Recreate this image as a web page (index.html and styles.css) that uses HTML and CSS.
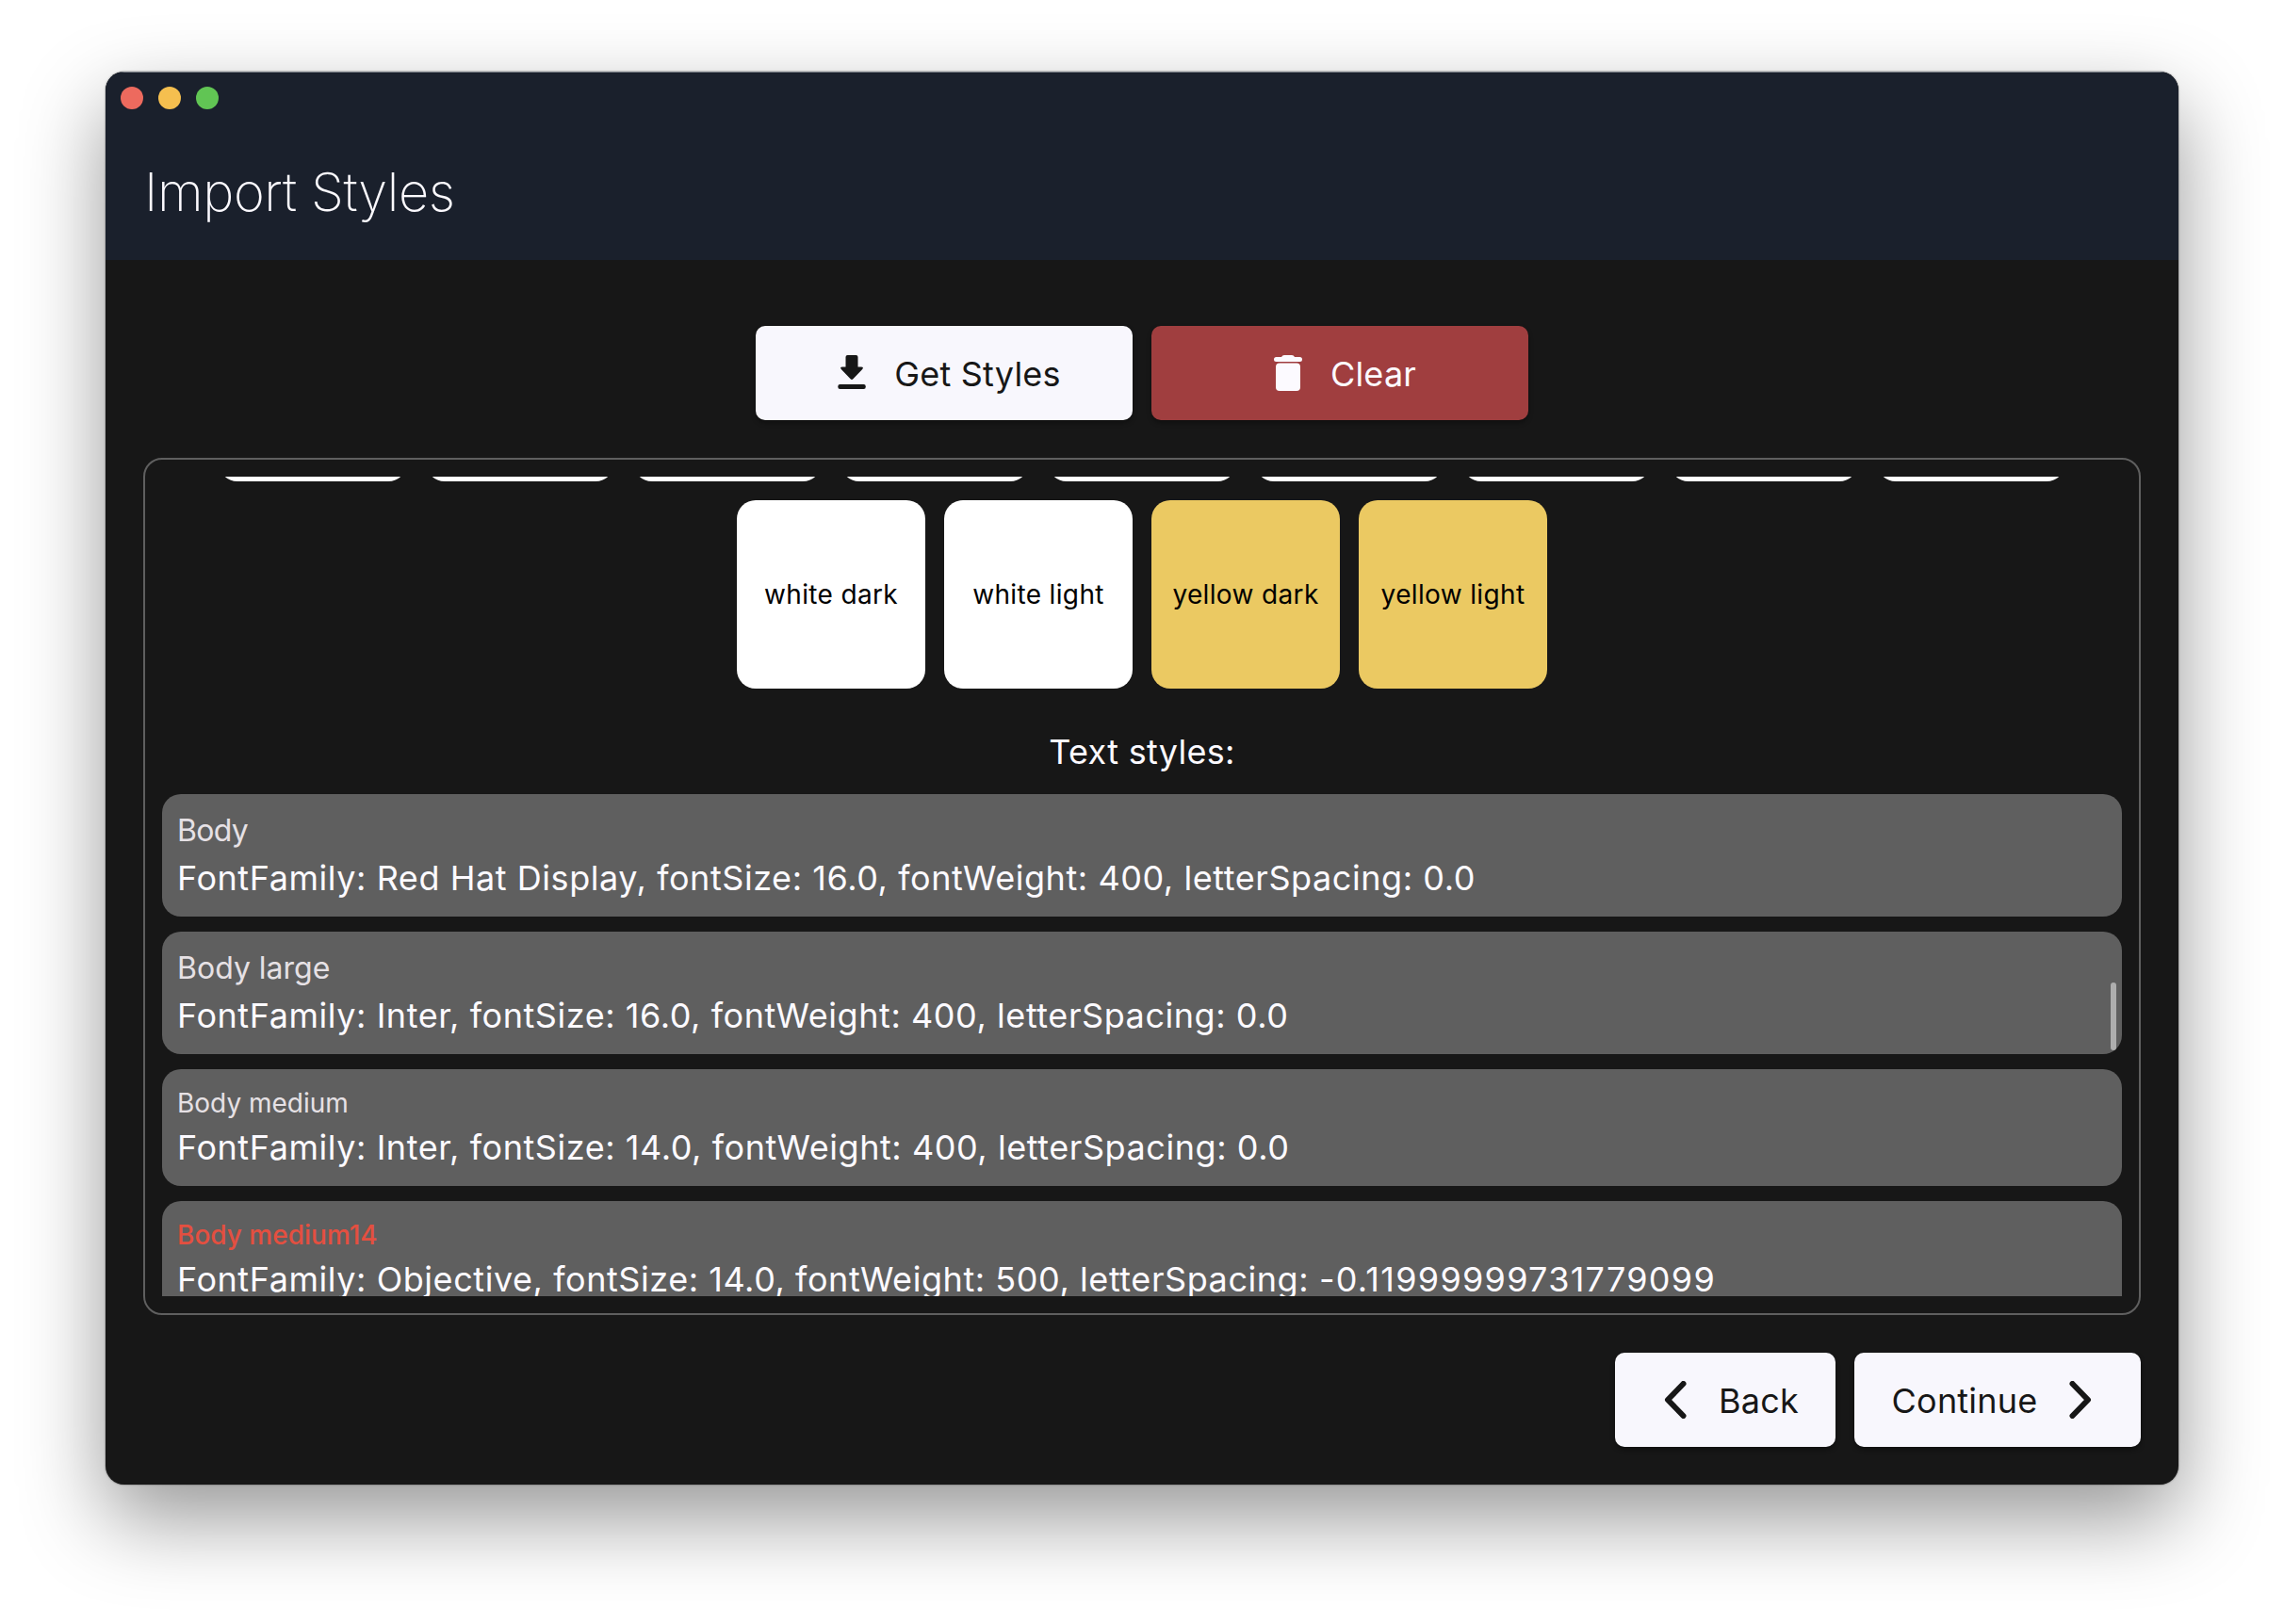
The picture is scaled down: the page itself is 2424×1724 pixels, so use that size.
FILE: index.html
```html
<!DOCTYPE html>
<html lang="en">
<head>
<meta charset="utf-8">
<title>Import Styles</title>
<link rel="stylesheet" href="styles.css">
</head>
<body>
<main class="window">
  <header class="header">
    <div class="lights"><span class="light close"></span><span class="light minimize"></span><span class="light zoom"></span></div>
    <h1 class="title">Import Styles</h1>
  </header>
  <div class="actions">
    <button class="button wide"><svg class="icon" viewBox="0 0 40 40"><path d="M15.5 2h9a2 2 0 0 1 2 2v10.500h3.500q3.300 0 1 2.700l-9.600 10q-1.400 1.400-2.800 0l-9.600-10q-2.300-2.700 1-2.700h3.500v-10.500a2 2 0 0 1 2-2z"/><rect x="5.300" y="33" width="29.500" height="5" rx="2.200"/></svg><span>Get Styles</span></button>
    <button class="button wide danger"><svg class="icon" viewBox="0 0 40 40"><path d="M7.500 4h5.500q1-2 3-2h8q2 0 3 2h5.500a2.500 2.500 0 0 1 0 5h-25a2.500 2.500 0 0 1 0-5z"/><rect x="7" y="10.500" width="26" height="29.500" rx="4"/></svg><span>Clear</span></button>
  </div>
  <section class="panel">
    <div class="scroll">
      <div class="swatches">
        <div class="swatch"></div>
        <div class="swatch"></div>
        <div class="swatch"></div>
        <div class="swatch"></div>
        <div class="swatch"></div>
        <div class="swatch"></div>
        <div class="swatch"></div>
        <div class="swatch"></div>
        <div class="swatch"></div>
        <div class="swatch">white dark</div>
        <div class="swatch">white light</div>
        <div class="swatch yellow">yellow dark</div>
        <div class="swatch yellow">yellow light</div>
      </div>
      <h2 class="subtitle">Text styles:</h2>
      <div class="cards">
        <article class="card">
          <div class="name display">Body</div>
          <div class="spec">FontFamily: Red Hat Display, fontSize: 16.0, fontWeight: 400, letterSpacing: 0.0</div>
        </article>
        <article class="card">
          <div class="name">Body large</div>
          <div class="spec">FontFamily: Inter, fontSize: 16.0, fontWeight: 400, letterSpacing: 0.0</div>
        </article>
        <article class="card compact">
          <div class="name">Body medium</div>
          <div class="spec">FontFamily: Inter, fontSize: 14.0, fontWeight: 400, letterSpacing: 0.0</div>
        </article>
        <article class="card compact">
          <div class="name missing">Body medium14</div>
          <div class="spec">FontFamily: Objective, fontSize: 14.0, fontWeight: 500, letterSpacing: <span class="value">-0.11999999731779099</span></div>
        </article>
      </div>
    </div>
    <span class="thumb"></span>
  </section>
  <footer class="footer">
    <button class="button back"><svg class="icon chevron" viewBox="0 0 40 40"><path d="M27.500 3L11 20L27.500 37"/></svg><span>Back</span></button>
    <button class="button next"><span>Continue</span><svg class="icon chevron" viewBox="0 0 40 40"><path d="M12.500 3L29 20L12.500 37"/></svg></button>
  </footer>
</main>
</body>
</html>
```

FILE: styles.css
```css
* { box-sizing: border-box; }
body {
  margin: 0;
  width: 2424px;
  height: 1724px;
  overflow: hidden;
  padding: 76px 112px 148px;
  background: #fff;
  font-family: Inter, "Liberation Sans", sans-serif;
  color: #fcfaff;
}
.window {
  width: 2200px;
  height: 1500px;
  display: flex;
  flex-direction: column;
  overflow: hidden;
  border-radius: 20px;
  background: #171717;
  box-shadow: 0 0 2px rgba(0,0,0,.6), 0 36px 88px rgba(0,0,0,.41);
}
.header {
  height: 200px;
  flex: none;
  padding: 15px 16px 0;
  background: #1a202c;
  border-top: 1px solid #7d828a;
}
.lights { display: flex; gap: 16px; height: 24px; }
.light { width: 24px; height: 24px; border-radius: 50%; }
.close { background: #ed6a5e; }
.minimize { background: #f5bf4f; }
.zoom { background: #61c554; }
.title {
  margin: 48px 0 0 25px;
  font-size: 56px;
  line-height: 80px;
  font-weight: 200;
  letter-spacing: -.4px;
}
.actions { display: flex; justify-content: center; gap: 20px; margin-top: 70px; }
.button {
  height: 100px;
  display: flex;
  align-items: center;
  justify-content: center;
  gap: 25px;
  border: 0;
  border-radius: 10px;
  padding: 2px 0 0 6px;
  background: #f8f7fd;
  color: #171717;
  font: 400 36px Inter, "Liberation Sans", sans-serif;
  letter-spacing: .2px;
  box-shadow: 0 3px 5px rgba(0,0,0,.35);
}
.wide { width: 400px; }
.danger { background: #a03e3f; color: #fcfaff; }
.icon { width: 40px; height: 40px; margin-bottom: 5px; fill: currentColor; flex: none; }
.chevron { margin-bottom: 3px; fill: none; stroke: currentColor; stroke-width: 6; stroke-linecap: round; stroke-linejoin: round; }
.panel {
  position: relative;
  height: 910px;
  margin: 40px 40px 0;
  padding: 18px;
  border: 2px solid #5f5f5f;
  border-radius: 20px;
}
.scroll {
  height: 870px;
  overflow: hidden;
  display: flex;
  flex-direction: column;
}
.swatches {
  flex: none;
  display: flex;
  flex-wrap: wrap;
  justify-content: center;
  gap: 20px;
  margin-top: -194.700px;
}
.swatch {
  width: 200px;
  height: 200px;
  display: flex;
  align-items: center;
  justify-content: center;
  border-radius: 20px;
  background: #fff;
  color: #000;
  font-size: 28px;
  letter-spacing: .35px;
}
.yellow { background: #ebc962; }
.subtitle {
  flex: none;
  margin: 40.700px 0 19.300px;
  text-align: center;
  font-size: 36px;
  line-height: 52px;
  font-weight: 400;
  letter-spacing: .3px;
}
.cards { display: flex; flex-direction: column; gap: 16px; }
.card { flex: none; height: 130px; padding: 16.700px 16px 0; border-radius: 20px; background: #5f5f5f; }
.compact { height: 124px; }
.name { font-size: 32px; line-height: 44px; color: #e6e1e5; }
.display { letter-spacing: -.7px; }
.compact .name { font-size: 28px; line-height: 38px; }
.compact .missing { color: #e44f40; font-weight: 500; }
.spec { margin-top: 2px; font-size: 36px; line-height: 52px; letter-spacing: .56px; white-space: nowrap; }
.value { letter-spacing: 1.280px; }
.thumb { position: absolute; right: 24px; top: 555px; width: 6px; height: 72px; border-radius: 3px; background: #aeaeae; }
.footer { display: flex; justify-content: flex-end; gap: 20px; margin: 40px 40px 0; }
.back { width: 234px; }
.next { width: 304px; padding: 2px 5px 0 0; }
```
